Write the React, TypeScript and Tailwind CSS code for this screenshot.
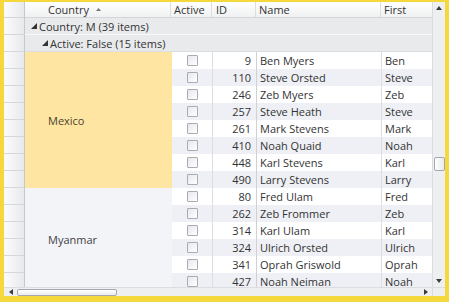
import React from 'react';

type Person = { id: number; name: string; first: string };

const groups: { country: string; rows: Person[]; cellBg: string; textColor: string }[] = [
    {
        country: 'Mexico',
        cellBg: 'bg-[#fee6a2]',
        textColor: 'text-[#4a4230]',
        rows: [
            { id: 9, name: 'Ben Myers', first: 'Ben' },
            { id: 110, name: 'Steve Orsted', first: 'Steve' },
            { id: 246, name: 'Zeb Myers', first: 'Zeb' },
            { id: 257, name: 'Steve Heath', first: 'Steve' },
            { id: 261, name: 'Mark Stevens', first: 'Mark' },
            { id: 410, name: 'Noah Quaid', first: 'Noah' },
            { id: 448, name: 'Karl Stevens', first: 'Karl' },
            { id: 490, name: 'Larry Stevens', first: 'Larry' },
        ],
    },
    {
        country: 'Myanmar',
        cellBg: 'bg-[#f3f4f8]',
        textColor: 'text-[#3f3f3f]',
        rows: [
            { id: 80, name: 'Fred Ulam', first: 'Fred' },
            { id: 262, name: 'Zeb Frommer', first: 'Zeb' },
            { id: 314, name: 'Karl Ulam', first: 'Karl' },
            { id: 324, name: 'Ulrich Orsted', first: 'Ulrich' },
            { id: 341, name: 'Oprah Griswold', first: 'Oprah' },
            { id: 427, name: 'Noah Neiman', first: 'Noah' },
        ],
    },
];

function ExpandedGlyph() {
    return (
        <svg width="6" height="6" viewBox="0 0 6 6" className="shrink-0">
            <polygon points="6,0 6,6 0,6" fill="#333" />
        </svg>
    );
}

function Arrow({ dir }: { dir: 'up' | 'down' | 'left' | 'right' }) {
    const pts = {
        up: '0,4 3,0 6,4',
        down: '0,0 6,0 3,4',
        left: '4,0 4,6 0,3',
        right: '0,0 0,6 4,3',
    }[dir];
    const vertical = dir === 'up' || dir === 'down';
    return (
        <svg width={vertical ? 6 : 4} height={vertical ? 4 : 6} viewBox={vertical ? '0 0 6 4' : '0 0 4 6'}>
            <polygon points={pts} fill="#3c3c3c" />
        </svg>
    );
}

function CheckBox() {
    return <div className="w-[11px] h-[11px] border border-[#a9adb3] rounded-[1px] bg-gradient-to-br from-[#e6e8ec] to-[#ffffff]" />;
}

export default function App() {
    const allRows = groups.flatMap((g) => g.rows);

    return (
        <div className="w-[449px] h-[302px] bg-[#f5d83c] pl-[4px] pt-[2px] pr-[4px] pb-[6px] overflow-hidden" style={{ fontFamily: '"Open Sans", "Noto Sans", sans-serif' }}>
            <div className="w-[441px] h-[294px] flex flex-col bg-white text-[11px] text-[#333] leading-none">
                {/* grid + vertical scrollbar */}
                <div className="flex h-[285px]">
                    {/* row indicator column */}
                    <div className="w-[21px] flex flex-col bg-gradient-to-r from-[#fcfcfc] to-[#e8e9ec] border-r border-[#c6c8cc] overflow-hidden">
                        <div className="h-[16px] shrink-0 border-b border-[#d3d5d8]" />
                        {Array.from({ length: 18 }).map((_, i) => (
                            <div key={i} className="h-[17px] shrink-0 border-b border-[#d6d8dc]" />
                        ))}
                    </div>

                    {/* data area */}
                    <div className="w-[407px] flex flex-col overflow-hidden">
                        {/* header */}
                        <div className="h-[16px] shrink-0 flex bg-gradient-to-b from-[#ffffff] to-[#f0f1f2] border-b border-[#d3d5d8]">
                            <div className="w-[146px] flex items-center pl-[23px] gap-[7px] border-r border-[#dcdde0]">
                                <span>Country</span>
                                <svg width="5" height="3" viewBox="0 0 5 3"><polygon points="0,3 2.5,0 5,3" fill="#777" /></svg>
                            </div>
                            <div className="w-[41px] flex items-center pl-[3px] border-r border-[#dcdde0]">Active</div>
                            <div className="w-[44px] flex items-center pl-[4px] border-r border-[#dcdde0]">ID</div>
                            <div className="w-[125px] flex items-center pl-[3px] border-r border-[#dcdde0]">Name</div>
                            <div className="flex-1 flex items-center pl-[3px]">First</div>
                        </div>

                        {/* group rows */}
                        <div className="h-[17px] shrink-0 flex items-center gap-[2px] pl-[6px] bg-[#e9eaec] border-b border-[#f8f8f9]">
                            <ExpandedGlyph />
                            <span>Country: M (39 items)</span>
                        </div>
                        <div className="h-[17px] shrink-0 flex items-center gap-[2px] pl-[17px] bg-[#e9eaec] border-b border-[#dcdde0]">
                            <ExpandedGlyph />
                            <span>Active: False (15 items)</span>
                        </div>

                        {/* rows */}
                        <div className="flex">
                            <div className="w-[147px] flex flex-col shrink-0">
                                {groups.map((g) => (
                                    <div
                                        key={g.country}
                                        className={`${g.cellBg} ${g.textColor} flex items-center pl-[23px] shrink-0`}
                                        style={{ height: g.rows.length * 17 }}
                                    >
                                        {g.country}
                                    </div>
                                ))}
                            </div>
                            <div className="flex-1 flex flex-col">
                                {allRows.map((r, i) => (
                                    <div key={r.id} className={`h-[17px] shrink-0 flex ${i % 2 === 1 ? 'bg-[#eef0f5]' : 'bg-white'}`}>
                                        <div className="w-[41px] flex items-center justify-center border-r border-[#dcdee2]">
                                            <CheckBox />
                                        </div>
                                        <div className="w-[44px] flex items-center justify-end pr-[5px] border-r border-[#cfd1d5]">{r.id}</div>
                                        <div className="w-[125px] flex items-center pl-[3px] border-r border-[#dcdee2]">{r.name}</div>
                                        <div className="flex-1 flex items-center pl-[3px]">{r.first}</div>
                                    </div>
                                ))}
                            </div>
                        </div>
                    </div>

                    {/* vertical scrollbar */}
                    <div className="w-[13px] flex flex-col items-center bg-[#eeeff1] border-l border-[#dcdde0]">
                        <div className="h-[12px] flex items-center justify-center"><Arrow dir="up" /></div>
                        <div className="mt-[143px] w-[11px] h-[14px] rounded-[2px] border border-[#a4a8ae] bg-gradient-to-r from-[#ffffff] to-[#e9ebee]" />
                        <div className="flex-1" />
                        <div className="h-[12px] flex items-center justify-center"><Arrow dir="down" /></div>
                    </div>
                </div>

                {/* horizontal scrollbar */}
                <div className="flex h-[9px] border-t border-[#dcdde0]">
                    <div className="w-[428px] flex items-center bg-[#eeeff1]">
                        <div className="w-[13px] flex justify-center"><Arrow dir="left" /></div>
                        <div className="w-[100px] h-[7px] rounded-[2px] border border-[#a4a8ae] bg-gradient-to-b from-[#ffffff] to-[#e9ebee]" />
                        <div className="flex-1" />
                        <div className="w-[13px] flex justify-center"><Arrow dir="right" /></div>
                    </div>
                    <div className="w-[13px] bg-[#eeeff1] border-l border-[#dcdde0]" />
                </div>
            </div>
        </div>
    );
}
